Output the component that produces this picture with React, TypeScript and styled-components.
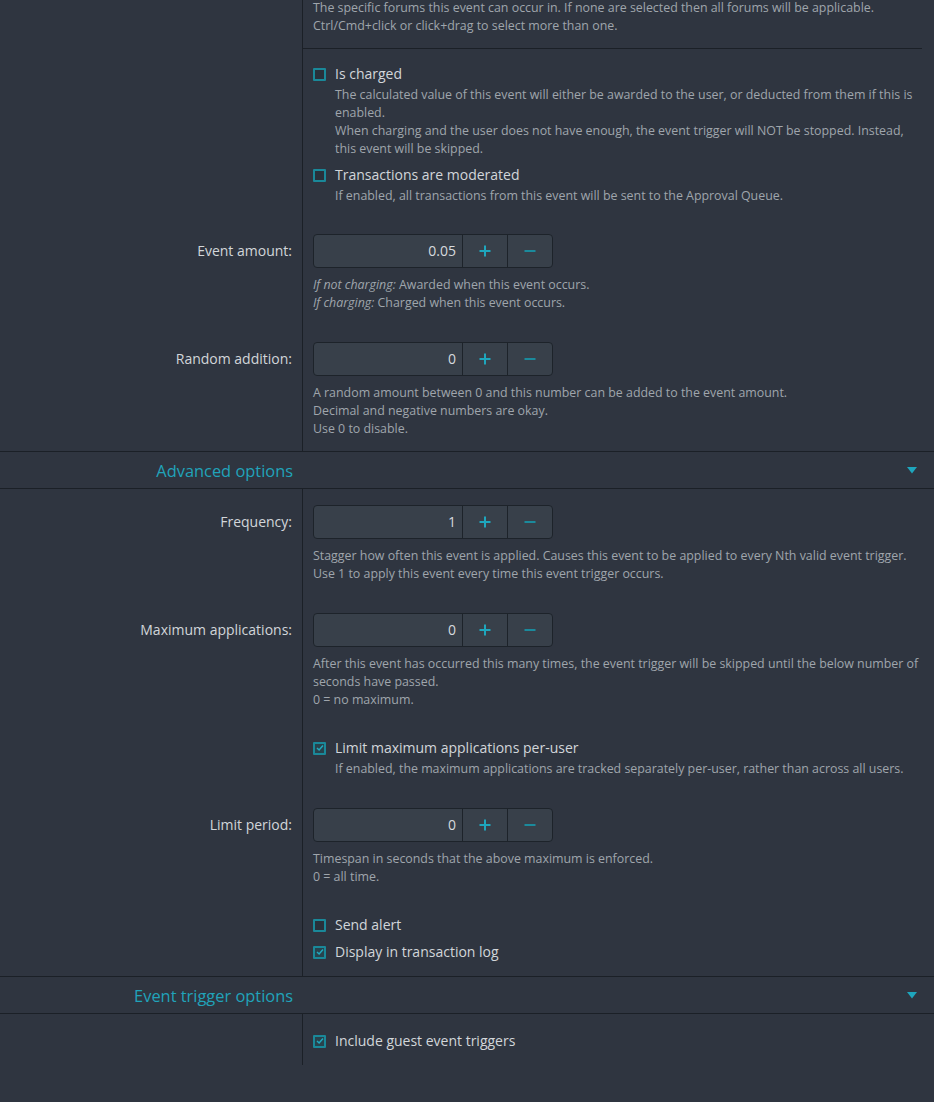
import React from 'react';
import styled, { createGlobalStyle } from 'styled-components';

const Global = createGlobalStyle`
  html, body { margin: 0; padding: 0; background: #2f3540; }
  body { font-family: "Open Sans", "Noto Sans", sans-serif; color: #d2d6da; }
  * { box-sizing: border-box; }
`;

const Page = styled.div`
  width: 934px;
  min-height: 1102px;
  background: #2f3540;
  overflow: hidden;
  display: flex;
  flex-direction: column;
`;

const Section = styled.div`
  display: flex;
  flex-direction: column;
`;

const Row = styled.div<{ $top?: number; $bottom?: number }>`
  display: grid;
  grid-template-columns: 303px 1fr;
  & > * {
    padding-top: ${(p) => p.$top ?? 0}px;
    padding-bottom: ${(p) => p.$bottom ?? 0}px;
  }
`;

const LabelCell = styled.div`
  border-right: 1px solid #1b2027;
  padding-right: 10px;
  text-align: right;
  font-size: 14px;
  line-height: 34px;
  color: #d2d6da;
`;

const ContentCell = styled.div<{ $divider?: boolean }>`
  padding-left: 10px;
  min-width: 0;
  ${(p) => (p.$divider ? 'border-bottom: 1px solid #1b2027; margin-right: 12px;' : '')}
`;

const Desc = styled.div<{ $mt?: number; $pb?: number; $indent?: boolean }>`
  font-size: 12.4px;
  line-height: 18px;
  color: #9fa5ac;
  margin-top: ${(p) => p.$mt ?? 0}px;
  padding-bottom: ${(p) => p.$pb ?? 0}px;
  padding-left: ${(p) => (p.$indent ? 22 : 0)}px;
  padding-right: 9px;
  em { font-style: italic; }
`;

const CheckLine = styled.label<{ $mt?: number }>`
  display: flex;
  align-items: center;
  gap: 9px;
  font-size: 14px;
  line-height: 20px;
  color: #d2d6da;
  margin-top: ${(p) => p.$mt ?? 0}px;
`;

const Box = styled.span<{ $checked?: boolean }>`
  width: 13px;
  height: 13px;
  border: 2px solid #1a8899;
  border-radius: 1px;
  background: ${(p) => (p.$checked ? '#28434d' : '#29313b')};
  display: inline-flex;
  align-items: center;
  justify-content: center;
  flex: none;
`;

const NumberGroup = styled.div`
  display: flex;
  width: 240px;
  height: 34px;
  border: 1px solid #1d232a;
  border-radius: 4px;
  background: #38404a;
  overflow: hidden;
`;

const NumberValue = styled.div`
  flex: 1;
  text-align: right;
  padding-right: 6px;
  font-size: 14px;
  line-height: 32px;
  color: #d6dade;
`;

const StepButton = styled.div`
  width: 45px;
  border-left: 1px solid #1d232a;
  display: flex;
  align-items: center;
  justify-content: center;
`;

const Header = styled.div`
  display: grid;
  grid-template-columns: 303px 1fr;
  height: 38px;
  border-top: 1px solid #1b2027;
  border-bottom: 1px solid #1b2027;
`;

const HeaderTitle = styled.div`
  text-align: right;
  padding-right: 10px;
  font-size: 16.4px;
  line-height: 38px;
  color: #21a3ba;
`;

const HeaderToggle = styled.div`
  display: flex;
  justify-content: flex-end;
  align-items: center;
  padding-right: 17px;
  padding-bottom: 2px;
`;

const Check = ({ checked }: { checked?: boolean }) => (
  <Box $checked={checked}>
    {checked && (
      <svg width="8" height="8" viewBox="0 0 8 8">
        <path d="M1 4 L3.1 6 L7 1.6" fill="none" stroke="#22a9bf" strokeWidth="1.5" />
      </svg>
    )}
  </Box>
);

const NumberField = ({ value }: { value: string }) => (
  <NumberGroup>
    <NumberValue>{value}</NumberValue>
    <StepButton>
      <svg width="12" height="12" viewBox="0 0 12 12">
        <path d="M6 0.5 V11.5 M0.5 6 H11.5" stroke="#1ea6bd" strokeWidth="2" />
      </svg>
    </StepButton>
    <StepButton>
      <svg width="12" height="12" viewBox="0 0 12 12">
        <path d="M0.5 6 H11.5" stroke="#1b8a9c" strokeWidth="2" />
      </svg>
    </StepButton>
  </NumberGroup>
);

const Caret = () => (
  <svg width="10" height="7" viewBox="0 0 10 7">
    <path d="M0 0 H10 L5 6.5 Z" fill="#1ea6bd" />
  </svg>
);

type FieldProps = { label: string; value: string; top: number; bottom?: number; children: React.ReactNode };

const FieldRow = ({ label, value, top, bottom, children }: FieldProps) => (
  <Row $top={top} $bottom={bottom}>
    <LabelCell>{label}</LabelCell>
    <ContentCell>
      <NumberField value={value} />
      <Desc $mt={8}>{children}</Desc>
    </ContentCell>
  </Row>
);

type CheckProps = { label: string; checked?: boolean; mt?: number; children?: React.ReactNode };

const CheckOption = ({ label, checked, mt, children }: CheckProps) => (
  <>
    <CheckLine $mt={mt}>
      <Check checked={checked} />
      {label}
    </CheckLine>
    {children && (
      <Desc $mt={2} $indent>
        {children}
      </Desc>
    )}
  </>
);

export default function App() {
  return (
    <Page>
      <Global />
      <Section>
        <Row $top={0}>
          <LabelCell />
          <ContentCell $divider>
            <Desc $mt={-1} $pb={13}>
              The specific forums this event can occur in. If none are selected then all forums will be applicable.
              <br />
              Ctrl/Cmd+click or click+drag to select more than one.
            </Desc>
          </ContentCell>
        </Row>
        <Row $top={15}>
          <LabelCell />
          <ContentCell>
            <CheckOption label="Is charged">
              The calculated value of this event will either be awarded to the user, or deducted from them if this is
              enabled.
              <br />
              When charging and the user does not have enough, the event trigger will NOT be stopped. Instead, this
              event will be skipped.
            </CheckOption>
            <CheckOption label="Transactions are moderated" mt={7}>
              If enabled, all transactions from this event will be sent to the Approval Queue.
            </CheckOption>
          </ContentCell>
        </Row>
        <FieldRow label="Event amount:" value="0.05" top={29}>
          <em>If not charging:</em> Awarded when this event occurs.
          <br />
          <em>If charging:</em> Charged when this event occurs.
        </FieldRow>
        <FieldRow label="Random addition:" value="0" top={30} bottom={13}>
          A random amount between 0 and this number can be added to the event amount.
          <br />
          Decimal and negative numbers are okay.
          <br />
          Use 0 to disable.
        </FieldRow>
      </Section>

      <Header>
        <HeaderTitle>Advanced options</HeaderTitle>
        <HeaderToggle>
          <Caret />
        </HeaderToggle>
      </Header>

      <Section>
        <FieldRow label="Frequency:" value="1" top={16}>
          Stagger how often this event is applied. Causes this event to be applied to every Nth valid event trigger.
          <br />
          Use 1 to apply this event every time this event trigger occurs.
        </FieldRow>
        <FieldRow label="Maximum applications:" value="0" top={30}>
          After this event has occurred this many times, the event trigger will be skipped until the below number of
          seconds have passed.
          <br />0 = no maximum.
        </FieldRow>
        <Row $top={29}>
          <LabelCell />
          <ContentCell>
            <CheckOption label="Limit maximum applications per-user" checked>
              If enabled, the maximum applications are tracked separately per-user, rather than across all users.
            </CheckOption>
          </ContentCell>
        </Row>
        <FieldRow label="Limit period:" value="0" top={30}>
          Timespan in seconds that the above maximum is enforced.
          <br />0 = all time.
        </FieldRow>
        <Row $top={29} $bottom={14}>
          <LabelCell />
          <ContentCell>
            <CheckOption label="Send alert" />
            <CheckOption label="Display in transaction log" checked mt={7} />
          </ContentCell>
        </Row>
      </Section>

      <Header>
        <HeaderTitle>Event trigger options</HeaderTitle>
        <HeaderToggle>
          <Caret />
        </HeaderToggle>
      </Header>

      <Section>
        <Row $top={17} $bottom={14}>
          <LabelCell />
          <ContentCell>
            <CheckOption label="Include guest event triggers" checked />
          </ContentCell>
        </Row>
      </Section>
    </Page>
  );
}
